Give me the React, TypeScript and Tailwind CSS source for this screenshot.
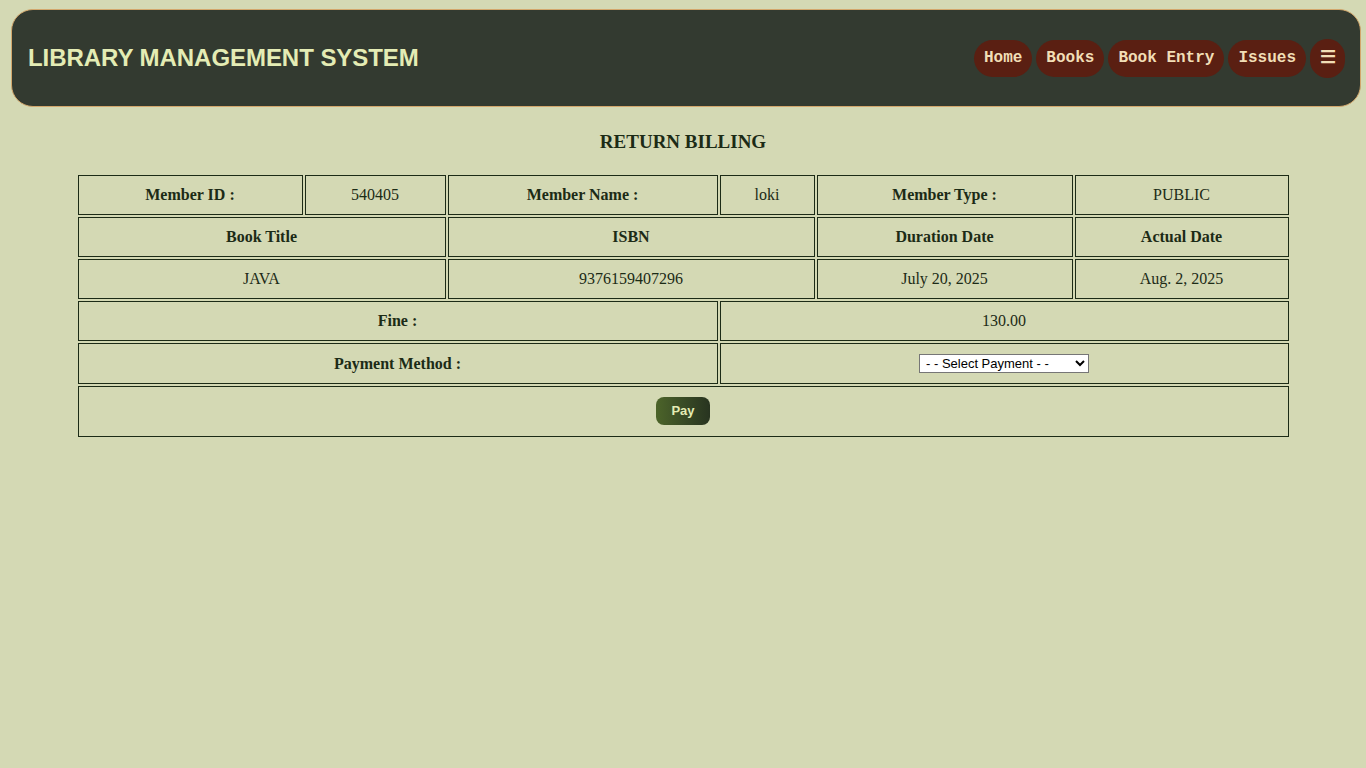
export default function App() {
  const navItems = ['Home', 'Books', 'Book Entry', 'Issues'];
  const cell = 'border border-[#1c2b16] text-center align-middle';
  return (
    <div className="min-h-screen w-full bg-[#d4d9b4] pt-[9px] font-['Liberation_Serif',serif] text-[#1c2b16]">
      <header className="ml-[11px] mr-[5px] h-[98px] rounded-[22px] border border-[#d3a76c] bg-[#333a30] pl-4 pr-[15px] flex items-center justify-between">
        <h1 className="font-['Liberation_Sans',Arial,sans-serif] text-[24px] font-bold tracking-[-0.05px] text-[#e4ecb4]">
          LIBRARY MANAGEMENT SYSTEM
        </h1>
        <nav className="flex items-center gap-[4px] font-['Liberation_Mono','Courier_New',monospace] text-[16px] font-bold text-[#f1deb6]">
          {navItems.map((item) => (
            <a key={item} href="#" className="flex h-[37px] items-center rounded-full bg-[#5a1f12] px-[10px] whitespace-pre">
              {item}
            </a>
          ))}
          <button className="flex h-[39px] w-[35px] items-center justify-center rounded-full bg-[#5a1f12] text-[18px] text-[#f1deb6]">
            ☰
          </button>
        </nav>
      </header>

      <h2 className="mt-[24px] text-center text-[19px] font-bold leading-[22px] text-[#1c2b16]">RETURN BILLING</h2>

      <table className="mx-auto mt-[20px] w-[1215px] table-fixed border-separate border-spacing-[2px] text-[16px]">
        <colgroup>
          <col className="w-[225px]" />
          <col className="w-[141px]" />
          <col className="w-[270px]" />
          <col className="w-[95px]" />
          <col className="w-[256px]" />
          <col className="w-[214px]" />
        </colgroup>
        <tbody>
          <tr className="h-[40px]">
            <th className={cell}>Member ID :</th>
            <td className={cell}>540405</td>
            <th className={cell}>Member Name :</th>
            <td className={cell}>loki</td>
            <th className={cell}>Member Type :</th>
            <td className={cell}>PUBLIC</td>
          </tr>
          <tr className="h-[40px]">
            <th colSpan={2} className={cell}>Book Title</th>
            <th colSpan={2} className={cell}>ISBN</th>
            <th className={cell}>Duration Date</th>
            <th className={cell}>Actual Date</th>
          </tr>
          <tr className="h-[40px]">
            <td colSpan={2} className={cell}>JAVA</td>
            <td colSpan={2} className={cell}>9376159407296</td>
            <td className={cell}>July 20, 2025</td>
            <td className={cell}>Aug. 2, 2025</td>
          </tr>
          <tr className="h-[40px]">
            <th colSpan={3} className={cell}>Fine :</th>
            <td colSpan={3} className={cell}>130.00</td>
          </tr>
          <tr className="h-[41px]">
            <th colSpan={3} className={cell}>Payment Method :</th>
            <td colSpan={3} className={cell}>
              <select className="mb-[2px] h-[19px] w-[170px] border border-[#767676] bg-white px-[2px] align-middle font-['Liberation_Sans',Arial,sans-serif] text-[13px] text-black">
                <option>- - Select Payment - -</option>
                <option>Cash</option>
                <option>Card</option>
                <option>UPI</option>
              </select>
            </td>
          </tr>
          <tr className="h-[51px]">
            <td colSpan={6} className={cell}>
              <button className="mb-[1px] h-[28px] w-[54px] rounded-[8px] bg-gradient-to-r from-[#4c6429] to-[#283420] align-middle font-['Liberation_Sans',Arial,sans-serif] text-[13px] font-bold text-[#e4ecb4]">
                Pay
              </button>
            </td>
          </tr>
        </tbody>
      </table>
    </div>
  );
}
